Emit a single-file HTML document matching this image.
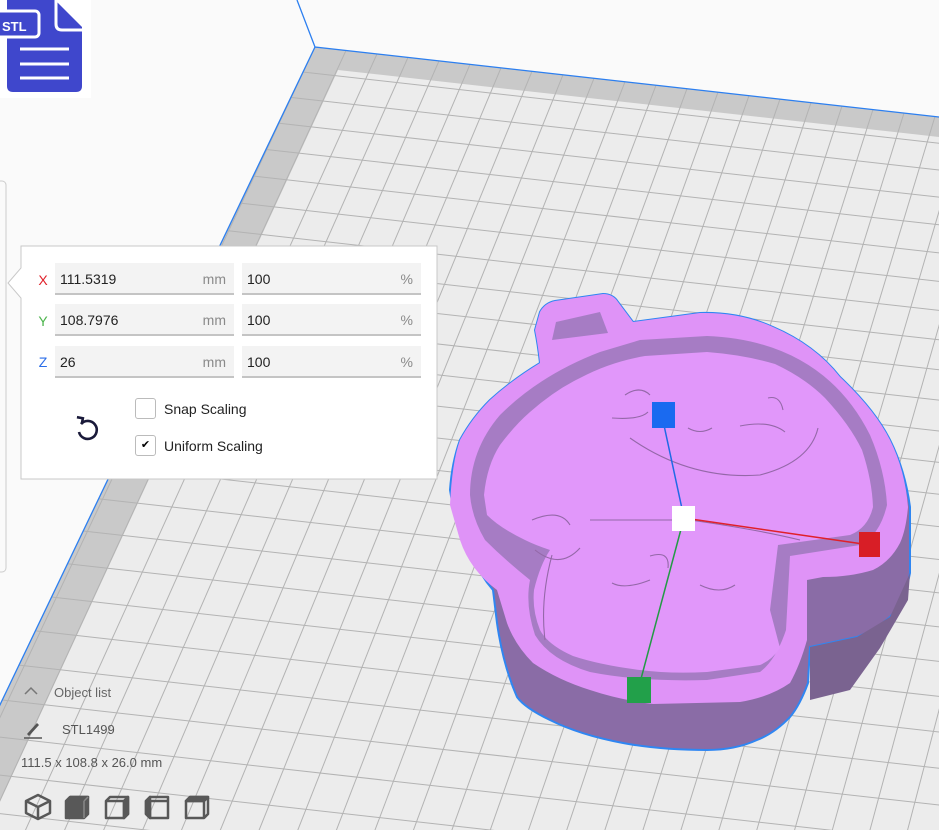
<!DOCTYPE html>
<html><head><meta charset="utf-8"><style>
html,body{margin:0;width:939px;height:830px;overflow:hidden}
body{background:#fafafa;font-family:"Liberation Sans","DejaVu Sans",sans-serif;position:relative}
.abs{position:absolute}
svg{overflow:hidden}
.field{position:absolute;height:30px;background:#f3f3f3;border-bottom:2px solid #c4c4c4;font-size:14px;color:#222;line-height:32px}
.field span.v{position:absolute;left:5px}
.field span.u{position:absolute;right:8px;color:#8a8a8a}
.lbl{position:absolute;left:37px;font-size:14px;width:12px;text-align:center}
.cb{position:absolute;left:135px;width:19px;height:19px;border:1px solid #bbb;border-radius:3px;background:#fff}
.ct{position:absolute;left:164px;font-size:14px;color:#222}
.bt{position:absolute;font-size:13px;color:#555}
</style></head><body>
<svg class="abs" style="left:0;top:0" width="939" height="830" id="sv">
<defs><clipPath id="pl"><polygon points="315,47 939,117 939,830 -60,830"/></clipPath></defs>
<polygon points="315,47 939,117 939,830 -60,830" fill="#c9c9c9"/>
<polygon points="338,70 939,137 939,830 -13,830" fill="#ececec"/>
<g id="grid" clip-path="url(#pl)" stroke="#b3b3b3" stroke-width="1"></g>
<polyline points="297,0 315,47 939,117" fill="none" stroke="#2c7ff0" stroke-width="1.3"/>
<line x1="315" y1="47" x2="-60" y2="830" stroke="#2c7ff0" stroke-width="1.3"/>
<!-- model outer with walls -->
<path fill="#8a6ca6" stroke="#2f86f2" stroke-width="2" stroke-linejoin="round" d="M535,330 L540,312 Q545,303 555,301 L603,294 Q613,294 618,302 L633,322 L700,313 Q740,312 773,327 Q815,345 840,377 Q875,410 890,440 Q905,470 910,507 L910,573 Q905,600 890,617 Q875,630 857,637 L810,647 L808,683 Q800,705 790,717 Q775,733 757,740 Q735,750 707,750 Q660,750 623,743 Q580,735 550,720 Q525,708 517,697 Q503,665 497,623 L493,590 Q480,575 473,557 Q455,525 450,490 Q452,462 460,440 Q472,418 490,400 Q512,380 540,363 Q538,345 535,330 Z"/>
<polygon fill="#7a6390" points="857,637 890,617 910,573 908,600 880,648 850,690 810,700 810,647"/>
<!-- top face -->
<path fill="#df93f7" d="M535,330 L540,312 Q545,303 555,301 L603,294 Q613,294 618,302 L633,322 L700,313 Q740,312 773,327 Q815,345 840,377 Q875,410 890,440 Q905,470 908,507 Q906,530 900,543 Q890,562 873,570 Q850,577 823,577 L807,580 L807,640 Q800,665 790,683 Q770,697 740,702 L653,704 Q620,700 590,690 Q558,680 533,663 Q515,645 507,623 L497,590 Q470,570 460,540 L450,505 Q452,462 460,440 Q472,418 490,400 Q512,380 540,363 Q538,345 535,330 Z"/>
<!-- inner well wall -->
<path fill="#a67cc4" d="M470,495 Q470,450 500,415 Q540,375 600,352 L640,340 L707,336 Q760,338 800,360 Q845,385 870,435 Q885,470 887,505 Q880,535 860,545 L790,556 L786,630 Q776,660 760,672 L707,680 Q640,682 590,672 Q550,660 535,635 Q525,605 530,580 Q505,560 485,540 Q472,518 470,495 Z"/>
<!-- tab hole -->
<path fill="#a67cc4" d="M552,340 L556,322 L600,312 L608,333 Z"/>
<!-- floor -->
<path fill="#e197fa" d="M484,495 Q487,465 500,445 Q515,425 530,412 Q555,390 580,378 Q610,362 645,356 L707,352 Q745,355 775,364 Q805,378 825,398 Q850,425 862,450 Q872,480 873,507 Q868,528 850,535 L778,545 L770,610 L780,648 Q772,660 760,665 L707,672 Q670,674 640,670 Q600,665 573,656 Q548,645 540,630 Q532,610 534,590 Q540,565 550,550 Q535,545 525,540 Q500,528 487,515 Z"/>
<g fill="none" stroke="#9468a8" stroke-width="1.1">
<path d="M630,438 Q690,480 760,475 Q810,462 818,428"/>
<path d="M625,395 Q640,385 650,395 M612,418 Q640,420 648,412 M688,428 Q700,435 712,428 M740,426 Q770,420 785,432 M768,398 Q780,395 783,410"/>
<path d="M532,520 Q560,508 570,525 M535,550 Q560,570 580,548 M650,556 Q670,550 668,568 M700,585 Q720,595 735,585 M612,583 Q625,590 650,580"/>
<path d="M590,520 L690,520 Q760,530 800,540"/>
<path d="M552,555 Q540,600 545,640"/>
</g>
<!-- gizmo -->
<line x1="684" y1="518" x2="662" y2="416" stroke="#1f6ae6" stroke-width="1.5"/>
<line x1="684" y1="518" x2="870" y2="545" stroke="#e0202a" stroke-width="1.5"/>
<line x1="684" y1="518" x2="638" y2="690" stroke="#239a45" stroke-width="1.5"/>
<rect x="652" y="402" width="23" height="26" fill="#1a6af0"/>
<rect x="859" y="532" width="21" height="25" fill="#d81e26"/>
<rect x="627" y="677" width="24" height="26" fill="#22a04a"/>
<rect x="672" y="506" width="23" height="25" fill="#fff"/>
<!-- STL icon -->
<rect x="0" y="0" width="91" height="98" fill="#fff"/>
<path d="M7,0 H55 L82,27 V86 Q82,92 76,92 H13 Q7,92 7,86 Z" fill="#3f47cc"/>
<path d="M56,0 V24 Q56,30 62,30 H82" fill="none" stroke="#fff" stroke-width="3"/>
<rect x="-6" y="11" width="45" height="26" rx="4" fill="#3f47cc" stroke="#fff" stroke-width="3"/>
<text x="2" y="31" font-family="Liberation Sans,sans-serif" font-weight="bold" font-size="13" fill="#fff">STL</text>
<g stroke="#fff" stroke-width="3"><line x1="20" y1="49" x2="69" y2="49"/><line x1="20" y1="64" x2="69" y2="64"/><line x1="20" y1="78" x2="69" y2="78"/></g>
<rect x="-6" y="181" width="12" height="391" rx="4" fill="#fafafa" stroke="#ccc"/>
<!-- panel -->
<polygon points="21,246 437,246 437,479 21,479 21,298 8,283 21,268" fill="#fff" stroke="#c8c8c8"/>
</svg>
<div class="lbl" style="top:272px;color:#e0202a">X</div>
<div class="lbl" style="top:313px;color:#4bb44b">Y</div>
<div class="lbl" style="top:354px;color:#2b6de8">Z</div>
<div class="field" style="left:55px;top:263px;width:179px"><span class="v">111.5319</span><span class="u">mm</span></div>
<div class="field" style="left:242px;top:263px;width:179px"><span class="v">100</span><span class="u">%</span></div>
<div class="field" style="left:55px;top:304px;width:179px"><span class="v">108.7976</span><span class="u">mm</span></div>
<div class="field" style="left:242px;top:304px;width:179px"><span class="v">100</span><span class="u">%</span></div>
<div class="field" style="left:55px;top:346px;width:179px"><span class="v">26</span><span class="u">mm</span></div>
<div class="field" style="left:242px;top:346px;width:179px"><span class="v">100</span><span class="u">%</span></div>
<div class="cb" style="top:398px"></div><div class="ct" style="top:401px">Snap Scaling</div>
<div class="cb" style="top:435px;font-size:11px;text-align:center;line-height:19px">✔</div><div class="ct" style="top:438px">Uniform Scaling</div>
<svg class="abs" style="left:73px;top:415px" width="28" height="28" viewBox="0 0 28 28"><path d="M8,9 A9,9 0 1 1 6,17" fill="none" stroke="#1a1a3a" stroke-width="2.6"/><path d="M3,3 L9,3 L9,9" fill="none" stroke="#1a1a3a" stroke-width="2.6" transform="rotate(10 8 8)"/></svg>
<svg class="abs" style="left:22px;top:685px" width="18" height="12"><path d="M3,9 L9,3 L15,9" fill="none" stroke="#777" stroke-width="1.5"/></svg>
<div class="bt" style="left:54px;top:685px;color:#666">Object list</div>
<svg class="abs" style="left:22px;top:720px" width="22" height="20"><path d="M5,14 L15,3 L17,5 L7,16 Z" fill="#555"/><line x1="2" y1="18" x2="20" y2="18" stroke="#555" stroke-width="1.5"/></svg>
<div class="bt" style="left:62px;top:722px">STL1499</div>
<div class="bt" style="left:21px;top:755px">111.5 x 108.8 x 26.0 mm</div>
<svg class="abs" style="left:24px;top:792px" width="190" height="30" fill="none" stroke="#585858" stroke-width="2.5" stroke-linejoin="round">
<path d="M14,3 L26,9 V21 L14,27 L2,21 V9 Z M2,9 L14,15 L26,9 M14,15 V27"/>
<path d="M46,5 H64 V22 L60,26 H42 V9 Z" fill="#585858"/><path d="M46,5 H64 L60,9 H42" stroke="#585858"/><path d="M60,9 V26 M60,9 L64,5" stroke="#888" stroke-width="1.5"/>
<path d="M86,5 H104 V22 L100,26 H82 V9 Z M82,9 H100 V26 M100,9 L104,5" /><path d="M100,9 L104,5 V22 L100,26 Z" fill="#585858"/>
<path d="M126,5 H144 V26 H126 L122,22 V9 Z M126,9 H144 M126,9 V26" /><path d="M122,9 L126,5 V26 L122,22 Z" fill="#585858"/>
<path d="M166,5 H184 V22 L180,26 H162 V9 Z M162,9 H180 V26 M180,9 L184,5"/><path d="M166,5 H184 L180,9 H162 Z" fill="#585858"/>
</svg>
<script>
(function(){var g=document.getElementById('grid'),h='';
var VX=2118,VY=-3790;
for(var k=-40;k<45;k++){var px=315+k*31,py=47+0.112*(k*31);
var t=(1000-VY)/(py-VY);var bx=VX+(px-VX)*t;
h+='<line x1="'+VX+'" y1="'+VY+'" x2="'+bx+'" y2="1000"/>';}
var y=47,s=25;for(var i=0;i<40;i++){var x=315-0.479*(y-47);
h+='<line x1="'+(x-400)+'" y1="'+(y-0.112*400)+'" x2="'+(x+1500)+'" y2="'+(y+0.112*1500)+'"/>';
y+=s;s=25+(y-47)*0.016;}
g.innerHTML=h;})();
</script>
</body></html>
